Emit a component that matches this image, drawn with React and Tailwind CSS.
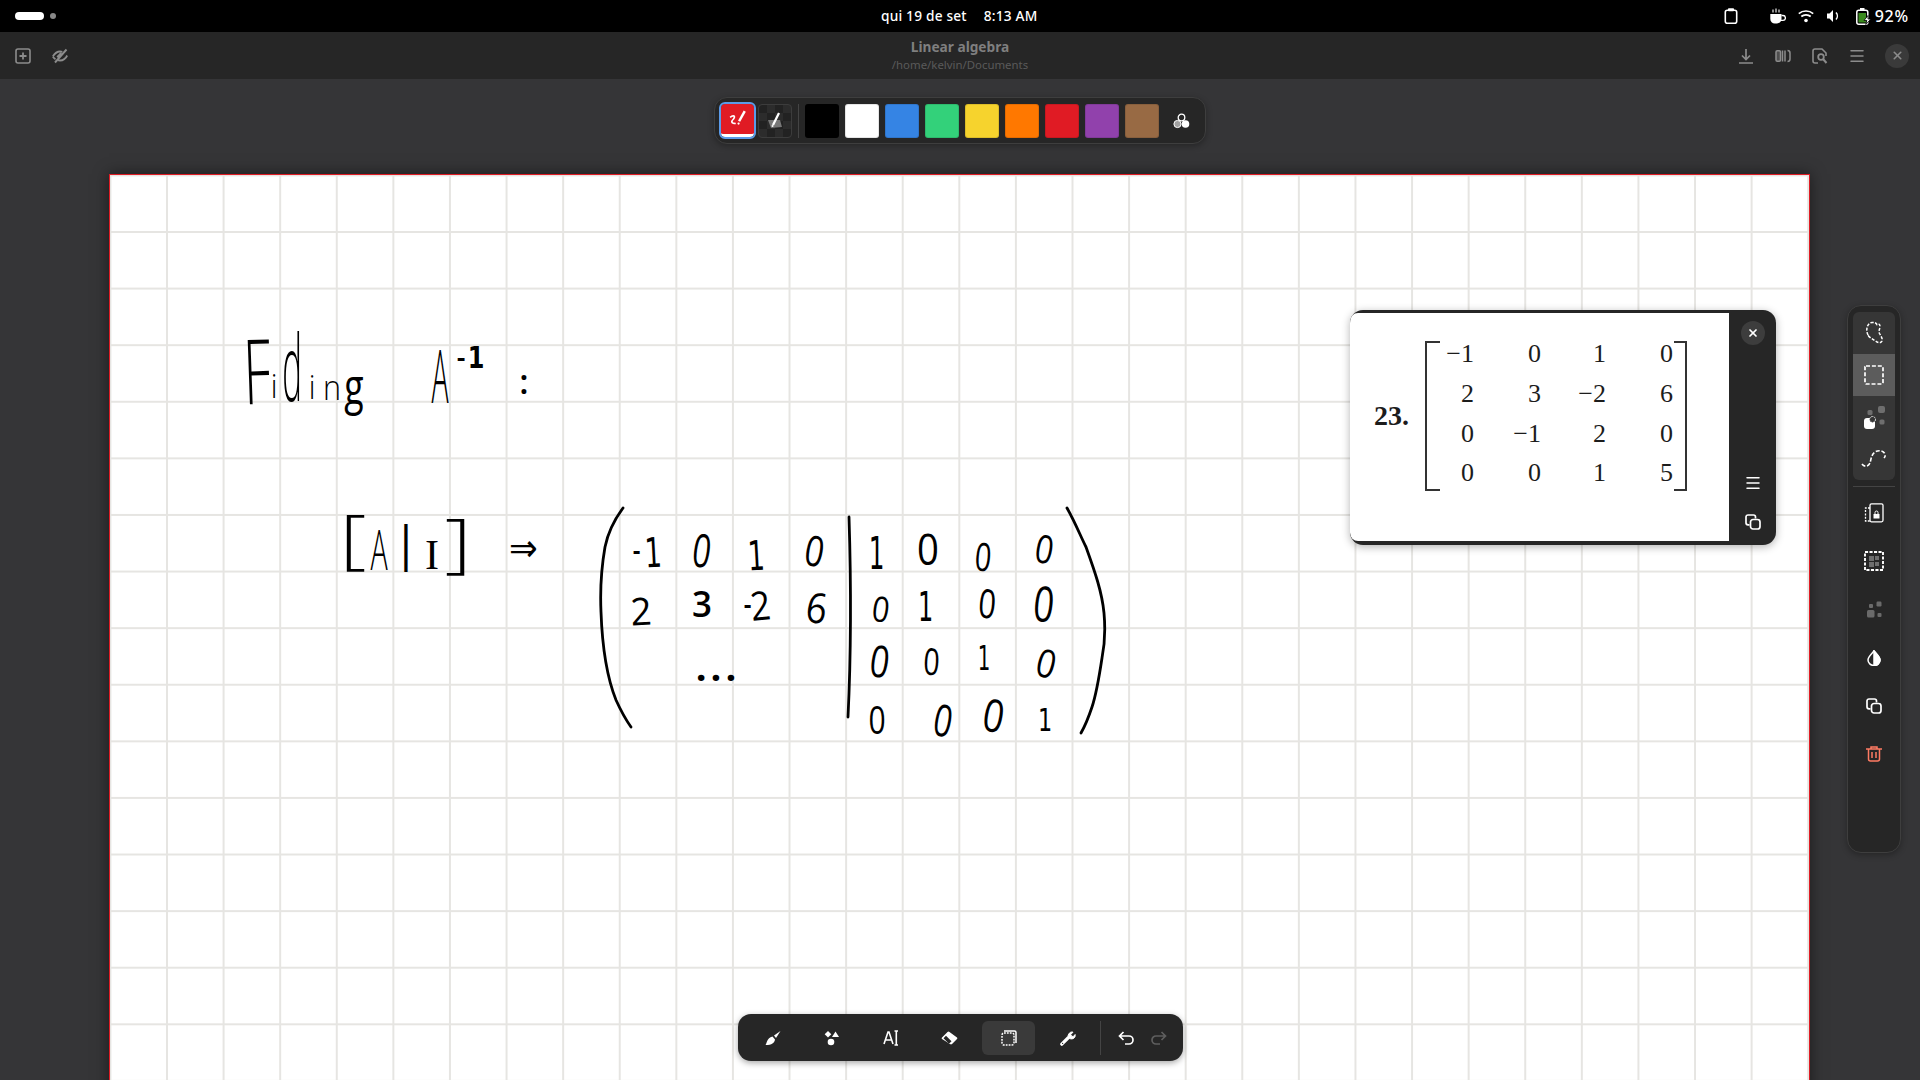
import React from "react";
import { X, Menu } from "lucide-react";

const swatches = ["bg-black", "bg-white", "bg-[#3584e4]", "bg-[#33d17a]", "bg-[#f6d32d]", "bg-[#ff7800]", "bg-[#e01b24]", "bg-[#9141ac]", "bg-[#986a44]"];

// icons
const PlusBox = () => (
  <svg width="16" height="16" viewBox="0 0 16 16" fill="none" stroke="currentColor" strokeWidth="1.6">
    <rect x="1" y="1" width="14" height="14" rx="2" />
    <path d="M8 4.500v7M4.500 8h7" strokeWidth="1.8" />
  </svg>
);
const EyeOff = () => (
  <svg width="16" height="16" viewBox="0 0 16 16" fill="none" stroke="currentColor" strokeWidth="1.800">
    <path d="M.8 8.500C3 5 5.500 3.500 8 3.500c.8 0 1.600.1 2.300.4M15.200 7.500c-1.200 2.500-3.500 5-7.200 5-.8 0-1.600-.1-2.300-.4M.8 8.500c.8 1.200 1.700 2.100 2.700 2.700" />
    <path d="M14.500 1.500 3 14.500" strokeWidth="1.900" />
    <path d="M5.500 9.500 9.500 5.300" strokeWidth="2.800" />
  </svg>
);
const Clipboard = () => (
  <svg width="16" height="16" viewBox="0 0 16 16" fill="none" stroke="white" strokeWidth="1.6">
    <rect x="2.300" y="2.300" width="11.400" height="12.900" rx="2" />
    <rect x="5" y="0.300" width="6" height="3" rx=".8" fill="white" stroke="none" />
  </svg>
);
const Coffee = () => (
  <svg width="16" height="16" viewBox="0 0 16 16" fill="white">
    <path d="M.3 6h11.200v5c0 2.500-2 4.500-4.500 4.500H4.800C2.300 15.500.3 13.500.3 11z" />
    <path d="M11.500 7.500h1.500a2.200 2.200 0 0 1 0 4.800h-2" fill="none" stroke="white" strokeWidth="1.300" />
    <path d="M3 1.500v3M6 .5v4M9 1.500v3" stroke="white" strokeWidth="1.100" fill="none" />
  </svg>
);
const Wifi = () => (
  <svg width="16" height="14" viewBox="0 0 16 14" fill="none" stroke="white" strokeWidth="1.700">
    <path d="M.8 4.700c4-3.600 10.400-3.600 14.400 0M3.300 7.500c2.600-2.300 6.800-2.300 9.400 0" />
    <circle cx="8" cy="11.500" r="1.800" fill="white" stroke="none" />
  </svg>
);
const Volume = () => (
  <svg width="14" height="14" viewBox="0 0 14 14" fill="white">
    <path d="M1 4.500h2.500L7 1v12L3.500 9.500H1z" />
    <path d="M10 3.500c1.800 2 1.800 5 0 7" fill="none" stroke="white" strokeWidth="1.500" />
  </svg>
);
const Battery = () => (
  <svg width="15" height="17" viewBox="0 0 15 17">
    <rect x=".8" y="2.300" width="11" height="13.900" rx="2" fill="none" stroke="white" strokeWidth="1.500" />
    <rect x="4" y="0" width="4.500" height="2" fill="white" />
    <rect x="2.500" y="5" width="7.500" height="9.500" fill="#3a8a1e" />
    <path d="M12 7.500 8 12.500h2.800l-1 4 5-5.500h-2.800z" fill="white" stroke="black" strokeWidth=".8" />
  </svg>
);
const Download = () => (
  <svg width="16" height="16" viewBox="0 0 16 16" fill="none" stroke="currentColor" strokeWidth="1.700">
    <path d="M8 1v10M4 7.500 8 11.500l4-4M1 15h14" />
  </svg>
);
const Book = () => (
  <svg width="16" height="14" viewBox="0 0 16 14" fill="none" stroke="currentColor" strokeWidth="1.500">
    <rect x="1" y="1.800" width="4.500" height="10.400" rx="1.200" fill="currentColor" fillOpacity=".4" />
    <path d="M7.500 1.500v11M10 1.500v11M12.500 1.500c2 0 2.500 1 2.500 2.500v6c0 1.500-.5 2.500-2.500 2.500" />
  </svg>
);
const DocSearch = () => (
  <svg width="16" height="16" viewBox="0 0 16 16" fill="none" stroke="currentColor" strokeWidth="1.600">
    <path d="M6 15H3a2 2 0 0 1-2-2V3a2 2 0 0 1 2-2h7l4 4v3" />
    <circle cx="9" cy="9" r="2.800" strokeWidth="1.800" />
    <path d="M11 11l3.500 4" strokeWidth="2" />
  </svg>
);
const Copy = ({ size = 16 }) => (
  <svg width={size} height={size} viewBox="0 0 16 16" fill="none" stroke="white" strokeWidth="1.700">
    <path d="M4.500 10.800H3a2 2 0 0 1-2-2V3a2 2 0 0 1 2-2h5.500a2 2 0 0 1 2 2v1.500" />
    <rect x="5.500" y="5.500" width="9.500" height="9.500" rx="2.500" />
  </svg>
);
const Lasso = () => (
  <svg width="19" height="24" viewBox="0 0 19 24" fill="none" stroke="white" strokeWidth="1.500" strokeDasharray="3 1.500">
    <path d="M3 14C.5 9 2 2 7 1.500c3-.3 4 .5 5 2 1.500-1.500 3.500 0 3 3-.5 2-1.500 3.500-.5 6 1 2 3.500 5 2.500 7.500-1 2-3 2-5 1-3-2-7-4-9.500-7z" />
  </svg>
);
const DashRect = () => (
  <svg width="20" height="20" viewBox="0 0 20 20" fill="none" stroke="white" strokeWidth="1.700" strokeDasharray="4 1.900">
    <rect x="1" y="1" width="18" height="18" rx="1" />
  </svg>
);
const Particles = () => (
  <svg width="22" height="24" viewBox="0 0 22 24">
    <rect x="4.500" y="5" width="5" height="5" rx="1.500" fill="#6e6e6e" />
    <rect x="15" y="1" width="7" height="7" rx="2" fill="#6e6e6e" />
    <rect x="16.500" y="14.500" width="5" height="5" rx="1.500" fill="#6e6e6e" />
    <rect x="1" y="13" width="11" height="11" rx="3" fill="white" />
    <circle cx="9.500" cy="14.500" r="3" fill="#363636" stroke="white" strokeWidth="1" strokeDasharray="1.500 1" />
  </svg>
);
const Curve = () => (
  <svg width="26" height="20" viewBox="0 0 26 20" fill="none" stroke="white" strokeWidth="1.600" strokeDasharray="4 1.800">
    <path d="M1 15c2 3 6 3 8-1 1-3 1-8 5-11 3-2 8-2 10 2 .5 2 0 3-1 4" />
  </svg>
);
const LockPage = () => (
  <svg width="20" height="20" viewBox="0 0 20 20" fill="none" stroke="white" strokeWidth="1.300">
    <rect x="6" y="0.800" width="13" height="18" rx="1.500" />
    <path d="M6 5H1.500v13H6" strokeDasharray="2 1.300" />
    <rect x="9.500" y="11" width="6" height="4.500" fill="white" stroke="none" />
    <path d="M11 11V9.500a1.500 1.500 0 0 1 3 0V11" strokeWidth="1" />
  </svg>
);
const DashGrid = () => (
  <svg width="20" height="20" viewBox="0 0 20 20" fill="none">
    <rect x="1" y="1" width="18" height="18" stroke="white" strokeWidth="1.900" strokeDasharray="3.100 1.400" />
    <rect x="5" y="5" width="5" height="5" fill="#6e6e6e" />
    <rect x="11" y="5" width="4" height="4" fill="#6e6e6e" />
    <rect x="5" y="11" width="5" height="5" fill="#6e6e6e" />
    <rect x="11" y="11" width="4" height="4" fill="#6e6e6e" />
  </svg>
);
const Dots = () => (
  <svg width="16" height="18" viewBox="0 0 16 18" fill="#6a6a6a">
    <rect x="3" y="3" width="4" height="4" rx="1" />
    <rect x="10.500" y="0.500" width="5" height="5" rx="1.200" />
    <rect x="1" y="9" width="7.500" height="7.500" rx="1.500" />
    <rect x="11.500" y="12" width="4" height="4" rx="1" />
  </svg>
);
const Drop = () => (
  <svg width="14" height="16" viewBox="0 0 14 16" stroke="white" strokeWidth="1.500" fill="none">
    <path d="M7 1C4.500 4 1 7 1 10a6 5.500 0 0 0 12 0c0-3-3.500-6-6-9z" />
    <path d="M7 1c2.500 3 6 6 6 9a6 5.500 0 0 1-6 5.500z" fill="white" />
  </svg>
);
const Trash = () => (
  <svg width="16" height="16" viewBox="0 0 16 16" fill="none" stroke="#ff7b63" strokeWidth="1.500">
    <path d="M0 3h16M5 3V1h6v2" />
    <path d="M2.500 3v10a2 2 0 0 0 2 2h7a2 2 0 0 0 2-2V3M6 6v6M10 6v6" />
  </svg>
);
const Brush = () => (
  <svg width="16" height="16" viewBox="0 0 16 16" fill="white">
    <path d="M15.500 1 9 5.500 11 8z" />
    <path d="M7.500 6.500 10 9.500C9.500 13 7 15 .5 15 2 13.500 1.500 8 7.500 6.500z" />
  </svg>
);
const Shapes = () => (
  <svg width="16" height="16" viewBox="0 0 16 16" fill="white">
    <path d="M4 1 7.300 4.300 4 7.600.7 4.300z" />
    <path d="M11.500 1.500 15 7H8z" />
    <circle cx="7" cy="12" r="3.300" />
  </svg>
);
const TextTool = () => (
  <svg width="16" height="16" viewBox="0 0 16 16" fill="none" stroke="white" strokeWidth="1.600">
    <path d="M1 14 5 2h1l4 12M2.500 10h6" />
    <path d="M11.500 1H15M13.300 1v14M11.500 15H15" />
  </svg>
);
const Eraser = () => (
  <svg width="17" height="14" viewBox="0 0 17 14" fill="white">
    <path d="M1 6.500 6.500 1a1.500 1.500 0 0 1 2 0l7.500 5.500a1 1 0 0 1 0 1.500l-5 5a1.500 1.500 0 0 1-2 0L1 8a1 1 0 0 1 0-1.500z" />
    <path d="M2.500 7.300 5 4.800l5.500 5.500-2 2H7.500z" fill="#262626" />
  </svg>
);
const PageSel = () => (
  <svg width="16" height="16" viewBox="0 0 16 16" fill="none" stroke="white">
    <path d="M3 1h10.500a1.500 1.500 0 0 1 1.500 1.500V13" strokeWidth="1.500" />
    <rect x="1" y="3" width="12" height="12" rx="2" strokeWidth="1.500" strokeDasharray="1.800 1.100" />
  </svg>
);
const Wrench = () => (
  <svg width="16" height="16" viewBox="0 0 16 16" fill="none" stroke="white" strokeWidth="2">
    <path d="M1.800 14.200 8.500 7.500" strokeWidth="3.200" strokeLinecap="round" />
    <path d="M9 8a3.700 3.700 0 0 1 .5-5c1-1 2.500-1.200 3.500-.8L10.800 4.500l.8 1.700 1.700.3 1.800-2c.3 1.500 0 2.500-1 3.500-1.200 1-3 1.200-4.500.5" fill="white" strokeWidth="1" />
    <circle cx="2.600" cy="13.400" r=".6" fill="#262626" stroke="none" />
  </svg>
);
const Undo = ({ className }) => (
  <svg className={className} width="16" height="14" viewBox="0 0 16 14" fill="none" stroke="currentColor" strokeWidth="1.700">
    <path d="M5.500 1 1.500 5l4 4M1.500 5H11a3.800 3.800 0 0 1 0 8H7" />
  </svg>
);
const Redo = ({ className }) => (
  <svg className={className} width="16" height="14" viewBox="0 0 16 14" fill="none" stroke="currentColor" strokeWidth="1.700">
    <path d="M10.500 1l4 4-4 4M14.500 5H5a3.800 3.800 0 0 0 0 8h4" />
  </svg>
);
const Venn = () => (
  <svg width="17" height="16" viewBox="0 0 17 16">
    <circle cx="8.500" cy="4.500" r="3.300" fill="none" stroke="white" strokeWidth="1.300" />
    <circle cx="4.500" cy="11" r="3.600" fill="#a0a0a0" stroke="white" strokeWidth="1" />
    <circle cx="12.500" cy="11" r="3.800" fill="white" />
  </svg>
);

// the pen strokes that are not letters
const inkStrokes = [
  "M623 508C612 523 607 537 605 547C601 570 600 590 601 612C602 640 606 675 616 700C621 711 626 720 631 727",
  "M1067 508C1075 522 1080 535 1086 547C1095 572 1102 592 1104 613C1106 635 1104 648 1102 658C1099 678 1095 698 1092 707C1088 719 1085 726 1081 733",
  "M849 517C851 580 851 655 848 717",
];

// handwritten marks: x, baseline y, size, scale x, rotate, font
const ink = [
  { c: "F", x: 258, y: 404, s: 90, sx: 0.6, r: -2, w: 300 },
  { c: "i", x: 274, y: 398, s: 33, sx: 0.9, w: 300 },
  { c: "d", x: 292, y: 401, s: 92, sx: 0.36, w: 300 },
  { c: "i", x: 312, y: 399, s: 33, sx: 0.9, w: 300 },
  { c: "n", x: 332, y: 400, s: 34, sx: 0.9, w: 300 },
  { c: "g", x: 354, y: 404, s: 34, sx: 1.05, sy: 1.45 },
  { c: "A", x: 440, y: 403, s: 73, sx: 0.39, w: 300 },
  { c: "-", x: 461, y: 368, s: 30, sx: 0.9, w: 600 },
  { c: "1", x: 476, y: 368, s: 30, sx: 0.8, f: "dv", w: 700 },
  { c: ":", x: 524, y: 394, s: 34, sx: 1, w: 600 },
  { c: "[", x: 353, y: 561, s: 64, sx: 1.3, w: 300 },
  { c: "A", x: 379, y: 570, s: 55, sx: 0.52, w: 300 },
  { c: "|", x: 406, y: 561, s: 48, sx: 1, w: 400 },
  { c: "I", x: 432, y: 569, s: 42, sx: 1, f: "serif" },
  { c: "]", x: 458, y: 565, s: 64, sx: 1.3, w: 300 },
  { c: "⇒", x: 523, y: 561, s: 38, sx: 0.9 },
  { c: "-", x: 636.5, y: 561, s: 30, sx: 0.8, w: 600 },
  { c: "1", x: 654, y: 567, s: 41, sx: 0.65, f: "dv", r: -3 },
  { c: "0", x: 699.5, y: 567, s: 46, sx: 0.7, r: 8 },
  { c: "1", x: 757, y: 570, s: 41, sx: 0.65, f: "dv", r: -3 },
  { c: "0", x: 812, y: 566, s: 42, sx: 0.8, r: 10 },
  { c: "1", x: 876.500, y: 569, s: 45, sx: 0.55, f: "dv" },
  { c: "0", x: 928, y: 565, s: 44, sx: 0.87 },
  { c: "0", x: 982, y: 571, s: 39, sx: 0.74, r: 5 },
  { c: "0", x: 1042, y: 563, s: 39, sx: 0.82, r: 10 },
  { c: "2", x: 641.700, y: 625, s: 38, sx: 0.97, r: -3 },
  { c: "3", x: 702, y: 617, s: 36, sx: 0.97, w: 600 },
  { c: "-", x: 747.700, y: 615, s: 30, sx: 0.8, w: 600 },
  { c: "2", x: 762, y: 620, s: 40, sx: 0.87, r: -6 },
  { c: "6", x: 814.500, y: 623, s: 42, sx: 0.87, r: 8 },
  { c: "0", x: 879, y: 621.700, s: 35, sx: 0.87, r: 8 },
  { c: "1", x: 925.700, y: 620.700, s: 40, sx: 0.6, f: "dv" },
  { c: "0", x: 986, y: 618, s: 40, sx: 0.77, r: 5 },
  { c: "0", x: 1042, y: 621.700, s: 49, sx: 0.74, r: 6 },
  { c: "0", x: 877.500, y: 677, s: 44, sx: 0.77, r: 8 },
  { c: "0", x: 931, y: 675, s: 37, sx: 0.77, r: 3 },
  { c: "1", x: 984, y: 670, s: 33, sx: 0.6, f: "dv" },
  { c: "0", x: 1043, y: 677, s: 39, sx: 0.87, r: 14 },
  { c: "0", x: 877, y: 734, s: 39, sx: 0.77 },
  { c: "0", x: 940.500, y: 736, s: 44, sx: 0.74, r: 10 },
  { c: "0", x: 991, y: 731.700, s: 45, sx: 0.82, r: 10 },
  { c: "1", x: 1045, y: 730.700, s: 32, sx: 0.7, f: "dv" },
];

const inkFont = { serif: "Liberation Serif", dv: "DejaVu Sans" };

const matrix = [
  ["−1", "0", "1", "0"],
  ["2", "3", "−2", "6"],
  ["0", "−1", "2", "0"],
  ["0", "0", "1", "5"],
];

const Ink = () => (
  <svg className="absolute left-0 top-0 pointer-events-none" width="1699" height="905" viewBox="110 175 1699 905">
    {inkStrokes.map((d, i) => (
      <path key={i} d={d} fill="none" stroke="black" strokeWidth="2.800" strokeLinecap="round" />
    ))}
    {ink.map((g, i) => (
      <text
        key={i}
        textAnchor="middle"
        fontSize={g.s}
        fontWeight={g.w || 400}
        fontFamily={inkFont[g.f] || "Open Sans"}
        transform={`translate(${g.x} ${g.y}) rotate(${g.r || 0}) scale(${g.sx} ${g.sy || 1})`}
      >
        {g.c}
      </text>
    ))}
    <text x="718" y="681" textAnchor="middle" fontSize="38" fontWeight="700" fontFamily="Open Sans" letterSpacing="4">...</text>
  </svg>
);

const App = () => {
  return (
    <div className="w-[1920px] h-[1080px] overflow-hidden relative flex flex-col bg-[#353537] font-['Noto_Sans',sans-serif]">
      {/* top bar */}
      <div className="h-8 bg-black text-white relative flex items-center justify-between pl-[15px] pr-[11px]">
        <div className="flex items-center gap-[6px]">
          <div className="w-[29px] h-2 rounded-full bg-white" />
          <div className="size-[6px] rounded-full bg-[#888]" />
        </div>
        <div className="absolute left-[881px] top-0 h-8 flex items-center gap-[17px] text-[13.700px] font-medium tracking-[0.2px]">
          <span>qui 19 de set</span>
          <span>8:13 AM</span>
        </div>
        <div className="flex items-center">
          <Clipboard />
          <div className="ml-[31px]"><Coffee /></div>
          <div className="ml-[12px]"><Wifi /></div>
          <div className="ml-[12px]"><Volume /></div>
          <div className="ml-[16px]"><Battery /></div>
          <span className="ml-[4px] text-[16px] font-medium tracking-[0.8px]">92%</span>
        </div>
      </div>

      {/* header */}
      <div className="h-[47px] bg-[#262626] relative flex items-center justify-between pl-[15px] pr-[11px] text-[#8c8c8c]">
        <div className="flex items-center gap-[21px]">
          <PlusBox />
          <EyeOff />
        </div>
        <div className="absolute left-0 right-0 top-0 h-full flex flex-col items-center justify-center pointer-events-none">
          <div className="text-[13.700px] leading-[18px] font-bold text-[#7f7f7f]">Linear algebra</div>
          <div className="text-[11.400px] leading-[17px] text-[#5a5a5a]">/home/kelvin/Documents</div>
        </div>
        <div className="flex items-center">
          <Download />
          <div className="ml-[21px]"><Book /></div>
          <div className="ml-[21px]"><DocSearch /></div>
          <Menu className="ml-[20px]" size={18} strokeWidth={2} />
          <div className="ml-[19px] size-6 rounded-full bg-[#3a3a3a] flex items-center justify-center">
            <X size={13} strokeWidth={3} />
          </div>
        </div>
      </div>

      {/* colour bar */}
      <div className="h-[95px] flex justify-center items-start pt-[18px] relative">
        <div className="h-[47px] w-[492px] rounded-[13px] bg-[#262626] border border-[#3e3e3e] shadow-[0_2px_6px_rgba(0,0,0,0.3)] flex items-center pl-[6px]">
          <div className="size-[33px] rounded-[4px] bg-[#e01b24] border-b-[3px] border-white outline-2 outline-[#5b9be8] flex items-center justify-center">
            <svg width="18" height="18" viewBox="0 0 16 16" fill="none" stroke="white" strokeWidth="1.500">
              <path d="M1 6.500c3-2.500 5-1 3 1.500-2 2-2.500 4 2 4" />
              <path d="M9 10 14 1" strokeWidth="2.200" />
              <circle cx="8.500" cy="12" r="1" fill="white" stroke="none" />
            </svg>
          </div>
          <div className="size-[34px] ml-1 rounded-[4px] border border-[#3c3c3c] bg-[conic-gradient(#2c2c2c_25%,#222_0_50%,#2c2c2c_0_75%,#222_0)] bg-[size:16px_16px] flex items-center justify-center relative">
            <svg width="16" height="18" viewBox="0 0 16 18" fill="none">
              <path d="M1 8h12l2 7-11 1z" fill="#777" />
              <path d="M6 13 12 1" stroke="white" strokeWidth="2.200" />
              <circle cx="5.500" cy="14" r="1" fill="white" />
            </svg>
          </div>
          <div className="w-px h-[34px] bg-[#444] mx-[6px]" />
          <div className="flex gap-[6px]">
            {swatches.map((c, i) => (
              <div key={i} className={`w-[34px] h-[34px] rounded-[3px] border border-black/10 ${c}`} />
            ))}
          </div>
          <div className="ml-[14px]"><Venn /></div>
        </div>
      </div>

      {/* page */}
      <div className="pl-[109px] flex-1 min-h-0">
        <div className="h-[960px] w-[1701px] relative border border-[#e01b24] bg-white bg-[linear-gradient(to_right,#e6e5e2_1.500px,transparent_1.500px),linear-gradient(to_bottom,#e6e5e2_1.500px,transparent_1.500px)] bg-[size:56.600px_56.600px] bg-[position:56px_56px] shadow-[0_0_14px_rgba(0,0,0,0.5)]">
          <Ink />
        </div>
      </div>

      {/* image popup */}
      <div className="absolute left-[1350px] top-[310px] w-[426px] h-[235px] rounded-[13px] bg-[#262626] flex overflow-hidden shadow-[0_2px_8px_rgba(0,0,0,0.3)]">
        <div className="w-[379px] mt-[3px] mb-[4px] bg-white rounded-l-[8px] pl-[24px] flex items-start font-['Liberation_Serif',serif] text-[#1c1c1c] text-[26px]">
          <div className="font-bold mt-[82px] text-[28px]">23.</div>
          <div className="ml-[16px] mt-[28px] w-[262px] h-[150px] relative border-l-2 border-[#333]">
            <div className="absolute left-0 top-0 w-[13px] h-full border-y-2 border-[#333]" />
            <div className="absolute right-0 top-0 w-[13px] h-full border-y-2 border-r-2 border-[#333]" />
            <div className="absolute left-0 top-[-7px] grid grid-cols-[47px_67px_65px_67px] auto-rows-[39.800px] justify-items-end leading-[39.800px]">
              {matrix.flat().map((n, i) => (
                <span key={i}>{n}</span>
              ))}
            </div>
          </div>
        </div>
        <div className="flex-1 flex flex-col items-center text-white pt-[11px] pb-[15px]">
          <div className="size-6 rounded-full bg-[#3d3d3d] flex items-center justify-center">
            <X size={12} strokeWidth={3.500} />
          </div>
          <Menu className="mt-auto" size={18} strokeWidth={2} />
          <div className="mt-[22px]"><Copy /></div>
        </div>
      </div>

      {/* right tools */}
      <div className="absolute left-[1847px] top-[305px] w-[54px] h-[548px] rounded-[14px] bg-[#262626] border border-[#3e3e3e] flex flex-col items-center pt-[6px] shadow-[0_2px_6px_rgba(0,0,0,0.3)]">
        <div className="w-[42px] h-[168px] rounded-[6px] bg-[#363636] flex flex-col items-center overflow-hidden">
          <div className="h-[42px] w-full flex items-center justify-center"><Lasso /></div>
          <div className="h-[42px] w-full flex items-center justify-center bg-[#5c5c5c]"><DashRect /></div>
          <div className="h-[42px] w-full flex items-center justify-center"><Particles /></div>
          <div className="h-[42px] w-full flex items-center justify-center"><Curve /></div>
        </div>
        <div className="w-[42px] h-px bg-[#444] mt-[6px]" />
        <div className="h-[49px] mt-[1px] flex items-center justify-center"><LockPage /></div>
        <div className="h-[48px] flex items-center justify-center"><DashGrid /></div>
        <div className="h-[49px] flex items-center justify-center"><Dots /></div>
        <div className="h-[48px] flex items-center justify-center"><Drop /></div>
        <div className="h-[48px] flex items-center justify-center"><Copy /></div>
        <div className="h-[48px] flex items-center justify-center"><Trash /></div>
      </div>

      {/* bottom tools */}
      <div className="absolute left-[738px] top-[1014px] w-[445px] h-[47px] rounded-[13px] bg-[#262626] shadow-[0_2px_6px_rgba(0,0,0,0.35)] flex items-center pl-[8px] gap-[6px] text-white">
        <div className="w-[53px] h-[34px] flex items-center justify-center"><Brush /></div>
        <div className="w-[53px] h-[34px] flex items-center justify-center"><Shapes /></div>
        <div className="w-[53px] h-[34px] flex items-center justify-center"><TextTool /></div>
        <div className="w-[53px] h-[34px] flex items-center justify-center"><Eraser /></div>
        <div className="w-[53px] h-[34px] rounded-[6px] bg-[#3a3a3a] flex items-center justify-center"><PageSel /></div>
        <div className="w-[53px] h-[34px] flex items-center justify-center"><Wrench /></div>
        <div className="w-px h-[34px] bg-[#444]" />
        <div className="w-[33px] ml-[2px] -mr-[6px] h-[34px] flex items-center justify-center"><Undo /></div>
        <div className="w-[33px] h-[34px] flex items-center justify-center"><Redo className="text-[#5e5e5e]" /></div>
      </div>
    </div>
  );
};

export default App;
